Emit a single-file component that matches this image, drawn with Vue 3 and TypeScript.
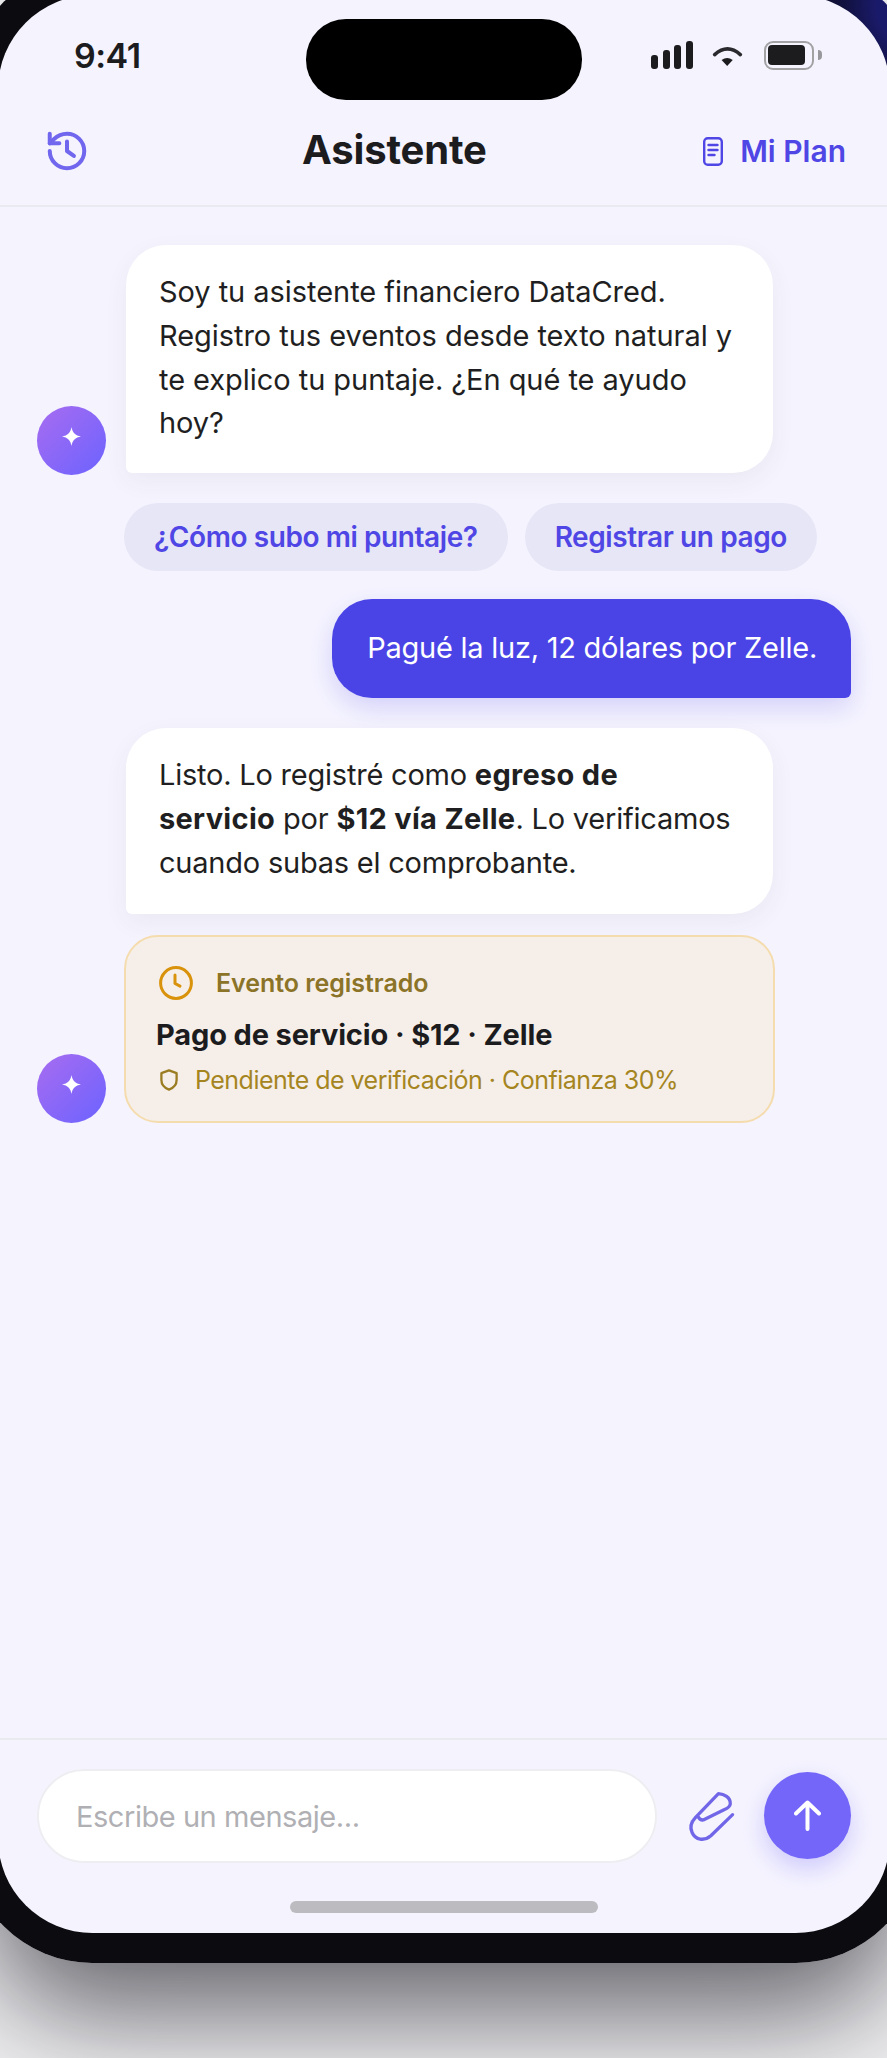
<script setup lang="ts">
const signalBars: number[] = [14, 19, 24, 28]
</script>

<template>
  <div class="stage">
    <div class="phone">
      <div class="screen">
        <div class="island"></div>
        <div class="status">
          <span class="time">9:41</span>
          <div class="status-icons">
            <div class="signal">
              <i v-for="h in signalBars" :key="h" :style="{ height: h + 'px' }"></i>
            </div>
            <svg class="wifi" viewBox="215 72 100 70">
              <path d="M226 104Q265 70 304 104" fill="none" stroke="#2a2a2e" stroke-width="11" stroke-linecap="round" />
              <path d="M247 121Q264 108 281 121L264 139Z" fill="#1c1c1e" />
            </svg>
            <div class="battery"><b></b></div>
            <div class="nub"></div>
          </div>
        </div>
        <header class="header">
          <svg class="history" viewBox="0 0 24 24" fill="none" stroke="#7166ee" stroke-width="2.1" stroke-linecap="round" stroke-linejoin="round">
            <path d="M3 12a9 9 0 1 0 9-9 9.75 9.75 0 0 0-6.74 2.74L3 8" />
            <path d="M3 3v5h5" />
            <path d="M12 7v5l3.6 2.6" />
          </svg>
          <h1 class="title">Asistente</h1>
          <div class="plan">
            <svg class="doc" viewBox="0 0 20 29" fill="none" stroke="#4f46e5" stroke-width="2.4" stroke-linecap="round">
              <rect x="1.2" y="1.2" width="17.6" height="26.6" rx="3.5" />
              <path d="M5.5 8h9M5.5 13h9M5.5 18h6" />
            </svg>
            <span>Mi Plan</span>
          </div>
        </header>

        <main class="messages">
          <div class="row">
            <div class="avatar">
              <svg viewBox="0 0 20 20"><path d="M10 0C11 6 14 9 20 10C14 11 11 14 10 20C9 14 6 11 0 10C6 9 9 6 10 0Z" fill="#fff" /></svg>
            </div>
            <div class="bubble">Soy tu asistente financiero DataCred. Registro tus eventos desde texto natural y te explico tu puntaje. ¿En qué te ayudo hoy?</div>
          </div>
          <div class="chips">
            <button class="chip">¿Cómo subo mi puntaje?</button>
            <button class="chip">Registrar un pago</button>
          </div>
          <div class="user-row">
            <div class="user-bubble">Pagué la luz, 12 dólares por Zelle.</div>
          </div>
          <div class="row row-flush">
            <div class="avatar">
              <svg viewBox="0 0 20 20"><path d="M10 0C11 6 14 9 20 10C14 11 11 14 10 20C9 14 6 11 0 10C6 9 9 6 10 0Z" fill="#fff" /></svg>
            </div>
            <div class="stack">
              <div class="bubble">Listo. Lo registré como <strong>egreso de<br />servicio</strong> por <strong>$12 vía Zelle</strong>. Lo verificamos cuando subas el comprobante.</div>
              <div class="card">
                <div class="card-head">
                  <svg class="clock" viewBox="0 0 34 34" fill="none" stroke="#d9920b" stroke-width="3" stroke-linecap="round" stroke-linejoin="round">
                    <circle cx="17" cy="17" r="15.4" />
                    <path d="M16 9v8.5l5 2.6" />
                  </svg>
                  <span>Evento registrado</span>
                </div>
                <div class="card-title">Pago de servicio · $12 · Zelle</div>
                <div class="card-meta">
                  <svg class="shield" viewBox="0 0 18 22" fill="none" stroke="#9a7d22" stroke-width="2.3" stroke-linejoin="round">
                    <path d="M9 1.4L16.6 4.2V11C16.6 15.6 13.4 19 9 20.6C4.6 19 1.4 15.6 1.4 11V4.2Z" />
                  </svg>
                  <span>Pendiente de verificación · Confianza 30%</span>
                </div>
              </div>
            </div>
          </div>
        </main>

        <footer class="footer">
          <div class="input-row">
            <div class="input">Escribe un mensaje...</div>
            <svg class="clip" viewBox="50 110 160 170" fill="none" stroke="#7166e8" stroke-width="10" stroke-linecap="round" stroke-linejoin="round">
              <path d="M191 191L125 255C105 272 78 268 68 245C60 228 64 215 78 200L148 127C165 128 185 138 184 158C183 168 175 172 165 176L102 207C95 208 90 204 87 198" />
            </svg>
            <button class="send">
              <svg viewBox="0 0 27 31" fill="none" stroke="#fff" stroke-width="4" stroke-linecap="round" stroke-linejoin="round">
                <path d="M13.5 29V2.5M2 13.5L13.5 2.5L25 13.5" />
              </svg>
            </button>
          </div>
          <div class="home"></div>
        </footer>
      </div>
    </div>
  </div>
</template>

<style>
html, body { margin: 0; background: #efeff1; }
</style>

<style scoped>
.stage {
  width: 887px;
  height: 2058px;
  overflow: hidden;
  background: #efeff1;
  font-family: Inter, "Liberation Sans", sans-serif;
  color: #1c1c1e;
}
.phone {
  width: 952px;
  box-sizing: border-box;
  margin: -35.5px 0 0 -32.5px;
  padding: 30px;
  border-radius: 124px;
  background: radial-gradient(circle at 100% 2%, #1a1a6a 2%, #11113f 3.5%, #0b0b10 6.5%);
  box-shadow: 0 70px 110px -20px rgba(10, 10, 20, 0.6);
}
.screen {
  position: relative;
  height: 1938.5px;
  box-sizing: border-box;
  padding: 0 2.5px;
  border-radius: 94.5px;
  overflow: hidden;
  background: #f5f4fe;
  display: flex;
  flex-direction: column;
}
.island {
  position: absolute;
  left: 308.5px;
  top: 24.5px;
  width: 276px;
  height: 81px;
  border-radius: 40px;
  background: #000;
}
.status {
  height: 121px;
  flex: none;
  display: flex;
  align-items: center;
  justify-content: space-between;
  padding: 0 65px 0 74px;
}
.time { font-size: 34px; font-weight: 600; letter-spacing: -0.5px; }
.status-icons { display: flex; align-items: center; }
.signal { display: flex; align-items: flex-end; gap: 4.6px; margin-right: 18px; }
.signal i { width: 7px; border-radius: 3px; background: #1c1c1e; display: block; }
.wifi { width: 33px; height: 23px; margin-right: 20px; }
.battery {
  width: 50px;
  height: 29px;
  box-sizing: border-box;
  border: 2.5px solid #a2a2a4;
  border-radius: 9px;
  padding: 2px;
}
.battery b { display: block; width: 37px; height: 20px; border-radius: 4px; background: #1c1c1e; }
.nub { width: 4px; height: 10px; margin-left: 4px; background: #98989c; border-radius: 0 5px 5px 0; }

.header {
  height: 71px;
  flex: none;
  box-sizing: content-box;
  padding: 0 41px 18px 46px;
  border-bottom: 2.5px solid #eaeaf1;
  display: flex;
  align-items: center;
  justify-content: space-between;
  position: relative;
}
.history { width: 46px; height: 46px; margin-left: -2px; }
.title {
  position: absolute;
  left: 302px;
  top: -1.5px;
  margin: 0;
  font-size: 40px;
  line-height: 71px;
  font-weight: 700;
  letter-spacing: -0.15px;
}
.plan {
  display: flex;
  align-items: center;
  gap: 17px;
  font-size: 30px;
  font-weight: 600;
  color: #4f46e5;
}
.doc { width: 20px; height: 29px; }

.messages {
  flex: 1;
  min-height: 0;
  padding: 38.5px 36px 0 37px;
  display: flex;
  flex-direction: column;
}
.row { display: flex; align-items: flex-end; gap: 20px; }
.avatar {
  width: 69px;
  height: 69px;
  flex: none;
  margin-bottom: -2px;
  border-radius: 50%;
  background: linear-gradient(135deg, #a86cf0, #6c63ff);
  display: flex;
  align-items: center;
  justify-content: center;
  padding-bottom: 8px;
  box-sizing: border-box;
}
.avatar svg { width: 19px; height: 19px; }
.row-flush { margin-top: 30px; }
.row-flush .avatar { margin-bottom: 0; }
.bubble {
  width: 647px;
  box-sizing: border-box;
  padding: 25px 36px 28px 33px;
  background: #fff;
  border-radius: 40px 40px 40px 6px;
  box-shadow: 0 8px 24px rgba(30, 30, 60, 0.06);
  font-size: 29px;
  line-height: 43.8px;
  letter-spacing: -0.05px;
  color: #1f1f22;
}
.stack .bubble { padding-bottom: 29.5px; letter-spacing: -0.22px; }
.bubble strong { font-weight: 700; letter-spacing: 0.3px; }
.chips { display: flex; gap: 17px; margin: 30px 0 0 87px; }
.chip {
  height: 68px;
  padding: 0 30px;
  border: 0;
  border-radius: 34px;
  background: #e6e6f7;
  color: #4f46e5;
  font: 600 28px Inter, "Liberation Sans", sans-serif;
  white-space: nowrap;
  letter-spacing: -0.42px;
}
.user-row { display: flex; justify-content: flex-end; margin-top: 28px; }
.user-bubble {
  height: 99px;
  box-sizing: border-box;
  padding: 0 34px 3px 35px;
  display: flex;
  align-items: center;
  border-radius: 40px 40px 6px 40px;
  background: #4a44e6;
  color: #fff;
  font-size: 29px;
  letter-spacing: -0.25px;
  box-shadow: 0 10px 26px rgba(79, 70, 229, 0.2);
}
.stack { display: flex; flex-direction: column; gap: 21px; }
.card {
  width: 651px;
  margin-left: -2px;
  height: 188px;
  box-sizing: border-box;
  padding: 29px 30px 0 30px;
  background: #f6efe9;
  border: 2.5px solid #f5dcae;
  border-radius: 34px;
}
.card-head {
  display: flex;
  align-items: center;
  gap: 23px;
  padding-left: 3px;
  height: 34px;
  font-size: 25px;
  font-weight: 600;
  letter-spacing: -0.05px;
  color: #8b7327;
}
.clock { width: 34px; height: 34px; }
.card-title {
  margin-top: 17px;
  font-size: 29px;
  line-height: 36px;
  font-weight: 700;
  letter-spacing: -0.14px;
  color: #1c1c1e;
}
.card-meta {
  margin-top: 10px;
  display: flex;
  align-items: center;
  gap: 17px;
  padding-left: 4px;
  height: 34px;
  font-size: 25px;
  letter-spacing: -0.52px;
  color: #a5851f;
}
.shield { width: 18px; height: 22px; }

.footer {
  height: 195px;
  flex: none;
  box-sizing: border-box;
  border-top: 2.5px solid #eaeaf1;
  padding: 28.5px 36px 0 37px;
}
.input-row { display: flex; align-items: center; }
.input {
  width: 620px;
  height: 94px;
  box-sizing: border-box;
  padding: 2px 0 0 37px;
  border: 2.5px solid #eeeef2;
  border-radius: 47px;
  background: #fff;
  display: flex;
  align-items: center;
  font-size: 29px;
  letter-spacing: -0.45px;
  color: #b0b0b4;
}
.clip { width: 53px; height: 56px; margin-left: 29px; }
.send {
  width: 87px;
  height: 87px;
  margin-left: 25px;
  padding: 0;
  border: 0;
  border-radius: 50%;
  background: #7366f8;
  box-shadow: 0 10px 24px rgba(115, 102, 248, 0.3);
  display: flex;
  align-items: center;
  justify-content: center;
}
.send svg { width: 27px; height: 31px; }
.home {
  width: 308px;
  height: 12px;
  margin: 38px 0 0 253px;
  border-radius: 6px;
  background: #bbbbc0;
}
</style>
